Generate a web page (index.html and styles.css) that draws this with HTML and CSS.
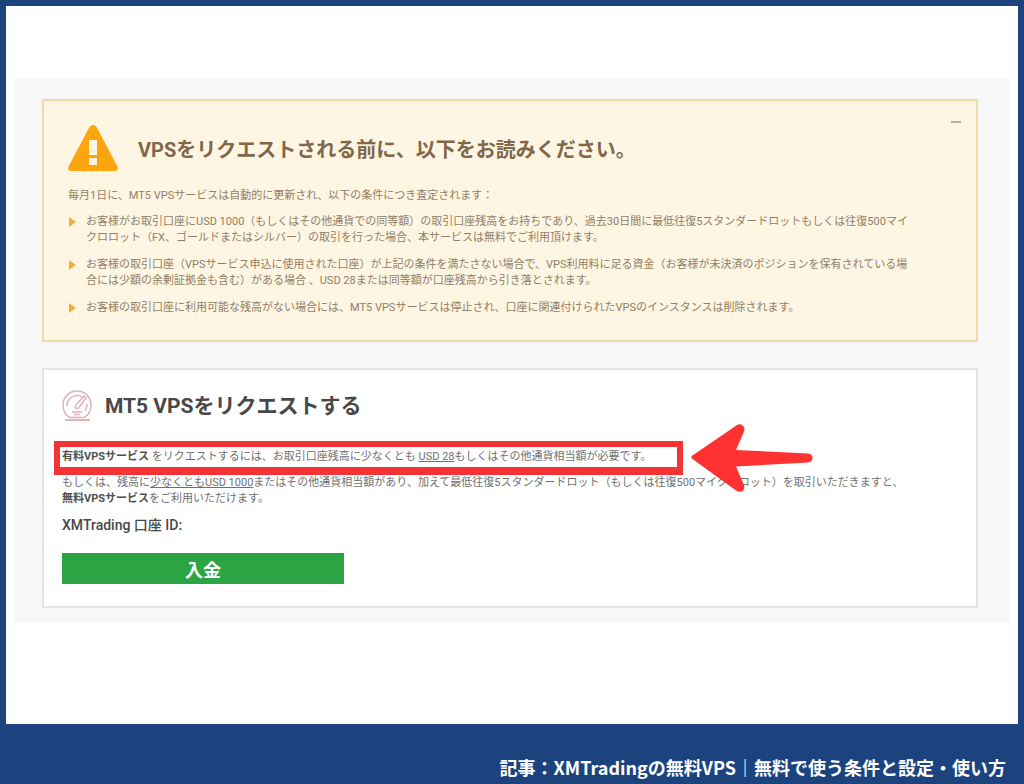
FILE: index.html
```html
<!DOCTYPE html>
<html lang="ja">
<head>
<meta charset="utf-8">
<meta name="viewport" content="width=device-width, initial-scale=1">
<title>XMTradingの無料VPS</title>
<link rel="stylesheet" href="styles.css">
</head>
<body>
<main class="sheet">
  <div class="content">
    <section class="panel notice">
      <button class="collapse" type="button" aria-label="閉じる"></button>
      <header class="notice-head">
        <svg class="warning" viewBox="0 0 50 46" aria-hidden="true">
          <path d="M21.500 2Q25-2 28.500 2L49.500 41.500Q51 46 46.500 46H3.500Q-1 46 .5 41.500Z" fill="#fda50f"/>
          <path d="M21 15h8v15h-8zM21 33h8v7h-8z" fill="#fff5e3"/>
        </svg>
        <h1 class="title">VPSをリクエストされる前に、以下をお読みください。</h1>
      </header>
      <p class="intro">毎月1日に、MT5 VPSサービスは自動的に更新され、以下の条件につき査定されます：</p>
      <ul class="terms">
        <li>お客様がお取引口座にUSD 1000（もしくはその他通貨での同等額）の取引口座残高をお持ちであり、過去30日間に最低往復5スタンダードロットもしくは往復500マイ<br>クロロット（FX、ゴールドまたはシルバー）の取引を行った場合、本サービスは無料でご利用頂けます。</li>
        <li>お客様の取引口座（VPSサービス申込に使用された口座）が上記の条件を満たさない場合で、VPS利用料に足る資金（お客様が未決済のポジションを保有されている場<br>合には少額の余剰証拠金も含む）がある場合 、USD 28または同等額が口座残高から引き落とされます。</li>
        <li>お客様の取引口座に利用可能な残高がない場合には、MT5 VPSサービスは停止され、口座に関連付けられたVPSのインスタンスは削除されます。</li>
      </ul>
    </section>
    <section class="panel request">
      <header class="request-head">
        <svg class="gauge" viewBox="0 0 30 32" fill="none" stroke="#dfb4b8" aria-hidden="true">
          <path d="M8 27.500C3 25 1 20 1 15a14 14 0 0 1 28 0c0 5-2 10-7 12.500z" stroke-width="1.500"/>
          <path d="M5 16A10 10 0 0 1 20 7M25 14q0 4-2 7" stroke-width="1.500"/>
          <path d="M22 6L24 8L17 17.500a2 2 0 1 1-3-2.500z" stroke-width="1.500"/>
          <path d="M10 22h10M12 24.500h6" stroke-width="1.500"/>
          <path d="M3 30h25" stroke-width="2"/>
        </svg>
        <h2 class="title">MT5 VPSをリクエストする</h2>
      </header>
      <div class="callout">
        <p class="marked"><strong>有料VPSサービス</strong> をリクエストするには、お取引口座残高に少なくとも <u>USD 28</u>もしくはその他通貨相当額が必要です。</p>
        <svg class="arrow" viewBox="0 0 122 68" aria-hidden="true">
          <path d="M1.500 31.500L46 1C50-1.500 55 3 53 7.500L45 26L117 29.500C123 30 123 38 117 38.500L45 42.500L53 61C55 66 50 70 45 66.500L1.500 35Q-1 33 1.500 31.500Z" fill="#ff3131"/>
        </svg>
      </div>
      <p class="alternative">もしくは、残高に<u>少なくともUSD 1000</u>またはその他通貨相当額があり、加えて最低往復5スタンダードロット（もしくは往復500マイクロロット）を取引いただきますと、<br><strong>無料VPSサービス</strong>をご利用いただけます。</p>
      <p class="account">XMTrading 口座 ID:</p>
      <button class="deposit" type="button">入金</button>
    </section>
  </div>
</main>
<footer class="caption">記事：XMTradingの無料VPS｜無料で使う条件と設定・使い方</footer>
</body>
</html>
```
FILE: styles.css
```css
* { box-sizing: border-box; }
body {
  margin: 0;
  min-height: 100vh;
  padding: 6px 6px 0;
  display: flex;
  flex-direction: column;
  background: #1d437f;
  font: 11px/16px Roboto, "Noto Sans CJK JP", sans-serif;
}
h1, h2, p, ul { margin: 0; padding: 0; }
.sheet {
  flex: 1;
  display: flex;
  flex-direction: column;
  justify-content: center;
  padding: 0 8px 29px;
  background: #fff;
}
.content {
  display: flex;
  flex-direction: column;
  gap: 26px;
  padding: 20px 32px 14px 28px;
  background: #f7f7f7;
}
.panel { position: relative; border: 2px solid #e4e4e4; }
.title { font-size: 20px; line-height: 28px; font-weight: 700; }
.notice {
  padding: 24px 24px 24px;
  border-color: #eadba8;
  background: #fff5e3;
  color: #907f66;
}
.collapse {
  position: absolute;
  top: 15px;
  right: 14px;
  width: 12px;
  height: 12px;
  padding: 0;
  border: 0;
  background: linear-gradient(#bdae94, #bdae94) center / 10px 2px no-repeat;
}
.notice-head { display: flex; align-items: center; gap: 20px; }
.notice-head .title { padding-top: 4px; color: #806849; }
.warning { width: 50px; height: 46px; }
.intro { margin-top: 17px; }
.terms {
  display: grid;
  gap: 11px;
  margin-top: 10px;
  list-style: none;
}
.terms li { position: relative; padding-left: 18px; }
.terms li::before {
  content: "";
  position: absolute;
  top: 3px;
  left: 1px;
  border: solid transparent;
  border-width: 5px 0 5px 7px;
  border-left-color: #f0ae3d;
}
.request { padding: 20px 18px 22px; background: #fff; color: #707070; }
.request-head {
  display: flex;
  align-items: center;
  gap: 13px;
  color: #484848;
}
.request-head .title { font-size: 21px; }
.gauge { width: 30px; height: 32px; }
.callout { position: relative; display: flex; margin: 19px 0 0 -8px; }
.marked {
  width: 629px;
  padding: 2px;
  border: solid #f53236;
  border-width: 6px 6px 8px;
}
.arrow {
  position: absolute;
  left: 637px;
  top: -17px;
  width: 122px;
  height: 68px;
}
strong { font-weight: 700; color: #505050; }
.account {
  margin-top: 8px;
  font-size: 14px;
  line-height: 20px;
  font-weight: 500;
  color: #484848;
}
.deposit {
  display: block;
  width: 282px;
  height: 31px;
  margin-top: 18px;
  padding: 0;
  border: 0;
  background: #2ba544;
  color: #fff;
  font: 700 18px/30px "Noto Sans CJK JP", sans-serif;
}
.caption {
  padding: 29px 12px 3px;
  color: #fff;
  text-align: right;
  font: 700 18px/28px "Noto Sans CJK JP", sans-serif;
}
```
